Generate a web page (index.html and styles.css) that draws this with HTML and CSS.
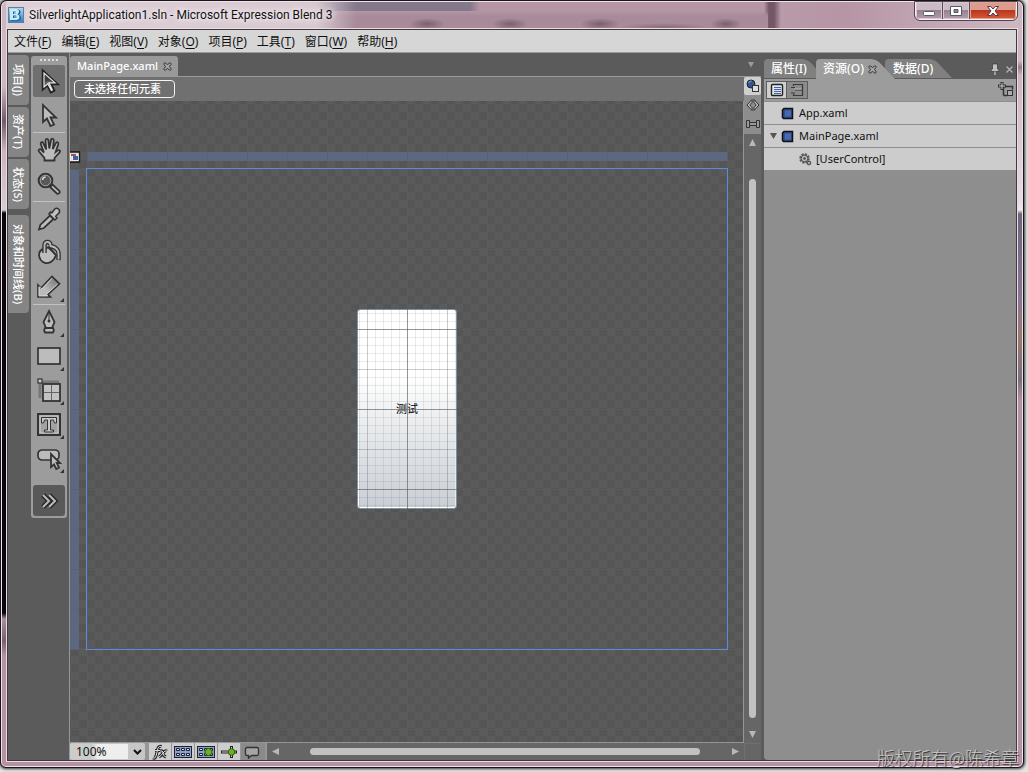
FILE: index.html
```html
<!DOCTYPE html>
<html lang="zh-CN">
<head>
<meta charset="utf-8">
<title>SilverlightApplication1.sln - Microsoft Expression Blend 3</title>
<link rel="stylesheet" href="styles.css">
</head>
<body>
<div class="window">
  <header class="titlebar">
    <svg class="app-icon" width="16" height="16" viewBox="0 0 16 16"><defs><linearGradient id="bl" x2="0" y2="1"><stop stop-color="#a9def5"/><stop offset="1" stop-color="#2c7fc0"/></linearGradient></defs><rect x=".5" y=".5" width="15" height="15" fill="url(#bl)" stroke="#5f7f9c"/><path d="M3 2.500h6.500q3 0 3 2.700q0 1.800-1.700 2.500q2.200.6 2.200 2.900q0 3.100-3.500 3.100H3zM6 5v2h2.500q1 0 1-1t-1-1zM6 9v2.300h2.800q1.200 0 1.200-1.100T8.800 9z" fill="#1f5f96" fill-rule="evenodd"/><path d="M2 2h6q3 0 3 2.700q0 1.800-1.700 2.500q2.200.6 2.200 2.900q0 3-3.500 3H2zM5 4.500V7h2q1 0 1-1.200T7 4.500zM5 8.500V11h2.500q1.200 0 1.200-1.200t-1.200-1.300z" fill="#c9ebf8" fill-rule="evenodd"/></svg>
    <h1 class="title">SilverlightApplication1.sln - Microsoft Expression Blend 3</h1>
    <div class="caption">
      <button class="cap min" aria-label="最小化"><svg width="14" height="12" viewBox="0 0 14 12"><rect x="1.500" y="6.500" width="11" height="4" rx="1" fill="#fff" stroke="#555a68"/></svg></button>
      <button class="cap max" aria-label="最大化"><svg width="14" height="12" viewBox="0 0 14 12"><path d="M1.500 1.500h11v9h-11zM5 4.500v3h4v-3z" fill="#fff" fill-rule="evenodd" stroke="#555a68"/></svg></button>
      <button class="cap close" aria-label="关闭"><svg width="14" height="12" viewBox="0 0 14 12"><path d="M1.500 1.500h3.300L7 4l2.200-2.500h3.300L9 6l3.500 4.500H9.200L7 8l-2.200 2.500H1.500L5 6z" fill="#fff" stroke="#553a42"/></svg></button>
    </div>
  </header>
  <main class="client">
    <nav class="menubar">
      <button>文件(<u>F</u>)</button><button>编辑(<u>E</u>)</button><button>视图(<u>V</u>)</button><button>对象(<u>O</u>)</button><button>项目(<u>P</u>)</button><button>工具(<u>T</u>)</button><button>窗口(<u>W</u>)</button><button>帮助(<u>H</u>)</button>
    </nav>
    <div class="workspace">
      <div class="side-tabs">
        <button>项目(J)</button><button>资产(T)</button><button>状态(S)</button><button class="apart">对象和时间线(B)</button>
      </div>
      <div class="tools">
        <div class="grip"></div>
        <button class="tool on" aria-label="选择"><svg viewBox="0 0 28 28"><path d="M8 4v18l4.500-4 3.500 7 3-1.500-3.300-6.500H22z" fill="#5e5e5e" stroke="#222" stroke-width="2.500"/><path d="M9 6.500V15l4.500-1.500 6 2z" fill="#3c3c3c"/><path d="M9 6v14l3.800-3.300 3.600 6.700 1-.5-3.400-7h6z" fill="none" stroke="#e6e6e6" stroke-width="1.200"/></svg></button>
        <button class="tool" aria-label="直接选择"><svg viewBox="0 0 28 28"><path class="ic" d="M8 4v17l4-3.500 3.500 7.500 3.500-1.500-3.500-7H21z"/></svg></button>
        <button class="tool sep" aria-label="平移"><svg viewBox="0 0 28 28"><path class="ic" d="M9.500 24.500v-2.500L4 15.500q-.9-1.400.2-2.100 1-.6 2.200.5L9 16.500 5.700 8q-.2-1.700 1-2 1.100-.1 1.700 1.300l2.800 6.200L10.500 4.500q.1-1.700 1.300-1.700T13.300 4l1 8.500L16 4q.4-1.500 1.600-1.200T18.800 4.600l-1 8.500 3-6q.8-1.400 1.800-.9t.7 2L20.600 16q3-2.600 4.200-1.500.8 1-.4 2.200L19.500 22v2.500z"/><path d="M11 23v-2l-2-4 3-2.500h6l1.500 3L18 21v2z" fill="#bcbcbc"/></svg></button>
        <button class="tool" aria-label="缩放"><svg viewBox="0 0 28 28"><circle cx="10.500" cy="10.500" r="6.800" fill="#595959" stroke="#333" stroke-width="2"/><circle cx="10.500" cy="10.500" r="5.300" fill="none" stroke="#a9a9a9"/><path d="M7.500 10q.4-3 3-3" fill="none" stroke="#ddd" stroke-width="1.500"/><path class="ic" d="M15 17l2.500-2.500 7 6.500q.8 1-.3 2.200-1.300 1.200-2.300.3z"/></svg></button>
        <button class="tool sep" aria-label="滴管"><svg viewBox="0 0 28 28"><path class="ic" d="M4 24.500l1.300-4.600L15 10.500l3.500 3.500-9.600 9z"/><path d="M14 9l6 6 2-2-1.300-1.700L24 8q1.400-2.400-.5-4-2-1.500-4 .3l-2.600 3.500L15.500 7z" fill="#c0c0c0" stroke="#333" stroke-width="1.500"/></svg></button>
        <button class="tool" aria-label="油漆桶"><svg viewBox="0 0 28 28"><path class="ic" d="M9 10Q4 11 4 16q.5 6 6 8 5 1 9-4l2-3.500-6.500-8.500z"/><path d="M9.500 14V6q.5-3.500 3.500-3 2.500.5 2.300 3.500M15 7q5 .5 7.500 4 1.500 2 1 10" fill="none" stroke="#333" stroke-width="4.500"/><path d="M9.500 14V6q.5-3.500 3.500-3 2.500.5 2.300 3.500M15 7q5 .5 7.500 4 1.500 2 1 9.500" fill="none" stroke="#bbb" stroke-width="1.800"/><path d="M12.500 8l8 7.500" stroke="#333" stroke-width="1.500"/></svg></button>
        <button class="tool more" aria-label="渐变"><svg viewBox="0 0 28 28"><defs><linearGradient id="gr" x1="1" x2="0" y2="1"><stop stop-color="#686868"/><stop offset=".65" stop-color="#bbb"/></linearGradient></defs><path d="M3 24V12l3 3L17 3.500l7.500 7.300L13 21.500l2.500 2.500z" fill="url(#gr)" stroke="#333" stroke-width="1.700"/><path d="M17 5.300L7 15.800l-3-2v9h8.500l-1-1.500L22.500 11" fill="none" stroke="#d4d4d4"/></svg></button>
        <button class="tool more sep" aria-label="钢笔"><svg viewBox="0 0 28 28"><path class="ic" d="M14 3l5.500 11-2.500 6h-6l-2.500-6z"/><path d="M14 4v8" stroke="#333"/><circle cx="14" cy="13" r="1.500" fill="#333"/><path class="ic" d="M10 20h8q1.500 2.500 0 4.500h-8q-1.500-2 0-4.500z"/></svg></button>
        <button class="tool more" aria-label="矩形"><svg viewBox="0 0 28 28"><rect x="3" y="6" width="22" height="16" fill="#bcbcbc" stroke="#333" stroke-width="1.700"/></svg></button>
        <button class="tool more" aria-label="网格"><svg viewBox="0 0 28 28"><path d="M5 22V6h19" fill="none" stroke="#777" stroke-width="3"/><rect x="8" y="8" width="17" height="17" fill="#c2c2c2" stroke="#333" stroke-width="1.800"/><path d="M16.500 9v15M9 16.500h15" stroke="#666"/><rect x="3" y="3" width="4" height="4" fill="#ccc" stroke="#333" stroke-width="1.200"/></svg></button>
        <button class="tool more" aria-label="文本块"><svg viewBox="0 0 28 28"><rect x="3" y="4" width="22" height="21" fill="#999" stroke="#333" stroke-width="2"/><rect x="5" y="6" width="18" height="17" fill="#a2a2a2" stroke="#ccc"/><path d="M6.500 7.500h15v5.500h-2l-1-3h-3v10h3v2h-9v-2h3V10h-3l-1 3h-2z" fill="#c8c8c8" stroke="#333"/></svg></button>
        <button class="tool more" aria-label="按钮控件"><svg viewBox="0 0 28 28"><rect x="3" y="6" width="21" height="10" rx="4" fill="#bcbcbc" stroke="#333" stroke-width="1.700"/><path class="ic" d="M16 10v13l3-2.500 2.300 4.500 2.700-1.300L21.700 19H25z"/></svg></button>
        <button class="expand" aria-label="更多工具"><svg width="28" height="28" viewBox="0 0 28 28"><path d="M8 8l6 6-6 6M14 8l6 6-6 6" fill="none" stroke="#292929" stroke-width="5"/><path d="M8 8l6 6-6 6M14 8l6 6-6 6" fill="none" stroke="#bbb" stroke-width="2"/></svg></button>
      </div>
      <section class="document">
        <div class="doc-tabs">
          <button class="doc-tab">MainPage.xaml <svg class="x" viewBox="0 0 9 9"><path d="M1 1h2l1.500 2L6 1h2v2L6 4.500 8 6v2H6L4.500 6 3 8H1V6l2-1.500L1 3z"/></svg></button>
          <svg class="drop" width="8" height="6" viewBox="0 0 8 6"><path d="M1 0h6L4 5.500z" fill="#9b9b9b"/></svg>
        </div>
        <div class="doc-body">
          <div class="surface">
            <div class="crumbs"><button>未选择任何元素</button></div>
            <div class="canvas">
              <svg class="anchor" width="11" height="12" viewBox="0 0 11 12"><path d="M0 1h9.500v10H0" fill="#eee" stroke="#111" stroke-width="1.300"/><path d="M1 3h5v2H1z" fill="#b54b4b"/><path d="M3 5h5v4H3z" fill="#3e62a5"/></svg>
              <div class="ruler-top"></div>
              <div class="ruler-left"></div>
              <div class="artboard"><div class="sl-button">测试</div></div>
              <div class="gridlines"></div>
              <div class="artboard outline"></div>
            </div>
          </div>
          <div class="right-rail">
            <div class="views">
              <button class="on" aria-label="设计"><svg viewBox="0 0 16 16"><circle cx="6" cy="6" r="4" fill="#2f5592" stroke="#222"/><path d="M3.500 5q.5-2 3-2" fill="none" stroke="#8fb0e0"/><rect x="7.500" y="7.500" width="6" height="6" fill="#ddd" stroke="#333"/></svg></button>
              <button aria-label="XAML"><svg viewBox="0 0 16 16"><path d="M7 2.500L2 8l5 5.500V10.500L4.800 8 7 5.500zM9 2.500L14 8l-5 5.500V10.500L11.200 8 9 5.500z" fill="#bbb" stroke="#333"/></svg></button>
              <button aria-label="拆分"><svg viewBox="0 0 16 16"><path d="M1.500 4.500h3v2h7v-2h3v7h-3v-2h-7v2h-3z" fill="#999" stroke="#333"/><path d="M4.500 5v6M11.500 5v6" stroke="#333"/></svg></button>
            </div>
            <div class="vscroll"><i class="up"></i><b></b><i class="down"></i></div>
          </div>
        </div>
        <div class="statusbar">
          <div class="zoom"><select aria-label="缩放比例"><option>100%</option></select><svg width="15" height="17" viewBox="0 0 15 17"><path d="M4 7l3.500 3.500L11 7" fill="none" stroke="#111" stroke-width="2"/></svg></div>
          <button class="st" aria-label="效果"><svg viewBox="0 0 20 16"><path d="M3 14q2 1 3-2l2-8q1-2.500 3.500-1.500M5 6.500h5M10 7q3-1 3 2t3 4M17 7q-2-1-4 2t-4 4" fill="none" stroke="#222" stroke-width="3"/><path d="M3 14q2 1 3-2l2-8q1-2.500 3.500-1.500M5 6.500h5M10 7q3-1 3 2t3 4M17 7q-2-1-4 2t-4 4" fill="none" stroke="#ddd"/></svg></button>
          <button class="st" aria-label="显示网格"><svg viewBox="0 0 20 16"><rect x="1.500" y="2.500" width="17" height="11" fill="#86a2dc" stroke="#222"/><path d="M3.500 4.500h3v2h-3zM8.500 4.500h3v2h-3zM13.500 4.500h3v2h-3zM3.500 9.500h3v2h-3zM8.500 9.500h3v2h-3zM13.500 9.500h3v2h-3z" fill="#e0e0e0" stroke="#222"/></svg></button>
          <button class="st" aria-label="对齐网格"><svg viewBox="0 0 20 16"><rect x="1.500" y="2.500" width="17" height="11" fill="#86a2dc" stroke="#222"/><path d="M3.500 4.500h3v2h-3zM8.500 4.500h3v2h-3zM13.500 4.500h3v2h-3zM3.500 9.500h3v2h-3zM8.500 9.500h3v2h-3zM13.500 9.500h3v2h-3z" fill="#e0e0e0" stroke="#222"/><circle cx="12.500" cy="8" r="3.500" fill="#68b41e" stroke="#355b12"/></svg></button>
          <button class="st" aria-label="对齐线"><svg viewBox="0 0 20 16"><path d="M2 8h16M12.500 2v12" stroke="#222" stroke-width="3"/><path d="M3 8h14M12.500 3v10" stroke="#ccc"/><circle cx="12.500" cy="8" r="3.300" fill="#68b41e" stroke="#355b12"/></svg></button>
          <button class="st off" aria-label="批注"><svg viewBox="0 0 20 16"><path d="M4 3.500h10q1.500 0 1.500 1.500v5q0 1.500-1.500 1.500H8.500L5.500 14v-2.500H4Q2.500 11.500 2.500 10V5Q2.500 3.500 4 3.500z" fill="#a5a5a5" stroke="#333" stroke-width="1.300"/></svg></button>
          <div class="hscroll"><i class="left"></i><b></b><i class="right"></i></div>
          <div class="corner"></div>
        </div>
      </section>
      <aside class="panel">
        <div class="panel-tabs">
          <button class="t1">属性(I)</button><button class="t2">资源(O) <svg class="x" viewBox="0 0 9 9"><path d="M1 1h2l1.500 2L6 1h2v2L6 4.500 8 6v2H6L4.500 6 3 8H1V6l2-1.500L1 3z"/></svg></button><button class="t3">数据(D)</button>
          <div class="panel-ctl">
            <svg width="10" height="12" viewBox="0 0 10 12"><path d="M2.500 1h5v5l1.500 1v1.500H1V7l1.500-1z" fill="#c2c2c2" stroke="#333" stroke-width=".7"/><path d="M5 8.500V12" stroke="#c2c2c2" stroke-width="1.300"/></svg>
            <svg width="7" height="7" viewBox="0 0 7 7"><path d="M.5.500l6 6M6.500.500l-6 6" stroke="#b4b4b4" stroke-width="1.200"/></svg>
          </div>
        </div>
        <div class="panel-bar">
          <div class="toggle"><button class="on" aria-label="列表"><svg viewBox="0 0 16 14"><rect x="2.500" y="1.500" width="11" height="11" rx="1" fill="#e6e6e6" stroke="#222" stroke-width="1.400"/><path d="M5 4.500h7M5 6.500h7M5 8.500h7M5 10.500h7" stroke="#3d64b5"/></svg></button><button aria-label="树"><svg viewBox="0 0 16 14"><path d="M4.500 3V1.500h9v11h-9V11M6 7h7M2 4.500h4M2 10h4" fill="none" stroke="#3a3a3a" stroke-width="1.200"/><path d="M5.500 6h7" stroke="#bbb"/></svg></button></div>
          <button class="add" aria-label="添加资源字典"><svg width="16" height="16" viewBox="0 0 16 16"><path d="M5.500 13.500v-9h9v3M5.500 13.500h4" fill="none" stroke="#333" stroke-width="1.500"/><path d="M4 0v8M0 4h8" stroke="#333" stroke-width="3"/><path d="M4 1v6M1 4h6" stroke="#ccc"/><rect x="9.500" y="8.500" width="5" height="5" fill="#aaa" stroke="#333"/></svg></button>
        </div>
        <ul class="tree">
          <li><span class="tw"></span><svg class="file" viewBox="0 0 13 13"><path d="M1.500 3l1.500-1.500h8.500v10h-9l-1-1z" fill="#324f8f" stroke="#111" stroke-width="1.500"/><path d="M4 3.500h6v6H4z" fill="#4669b0"/></svg>App.xaml</li>
          <li><span class="tw"><svg width="7" height="6" viewBox="0 0 7 6"><path d="M0 0h7L3.500 6z" fill="#555"/></svg></span><svg class="file" viewBox="0 0 13 13"><path d="M1.500 3l1.500-1.500h8.500v10h-9l-1-1z" fill="#324f8f" stroke="#111" stroke-width="1.500"/><path d="M4 3.500h6v6H4z" fill="#4669b0"/></svg>MainPage.xaml</li>
          <li class="child"><span class="tw"></span><svg class="file" viewBox="0 0 13 13"><circle cx="5.500" cy="5.500" r="4" fill="#aaa" stroke="#555" stroke-width="2.500" stroke-dasharray="2 1.100"/><circle cx="5.500" cy="5.500" r="3.300" fill="#bbb" stroke="#555"/><circle cx="5.500" cy="5.500" r="1.200" fill="#444"/><circle cx="10" cy="10" r="1.700" fill="#bbb" stroke="#555" stroke-width="1.300"/></svg>[UserControl]</li>
        </ul>
      </aside>
    </div>
  </main>
  <div class="watermark">版权所有@陈希章</div>
</div>
</body>
</html>
```
FILE: styles.css
```css
* { box-sizing: border-box; }
body {
  margin: 0;
  height: 100vh;
  padding: 0 4px 4px 0;
  background: #e4e4e4;
  font: 12px/16px "Noto Sans", "Noto Sans CJK SC", sans-serif;
  color: #111;
  overflow: hidden;
}
button {
  margin: 0; padding: 0; border: 0;
  background: none; color: inherit; font: inherit;
}
svg { display: block; flex: none; }

.window {
  position: relative;
  height: 100%;
  display: flex;
  flex-direction: column;
  padding: 1px 5px 5px;
  border: 1px solid #1a1418;
  border-radius: 7px 7px 6px 6px;
  box-shadow: inset 0 0 0 1px #efe3ea, 0 0 3px 1px #333;
  background:
    linear-gradient(#c9b4c0 0, #cdb8c2 60px, #8d7d86 66px, #cbb4be 74px, #e5dbe2 200px, #f0e6ee 209px, #6b687c 213px, #8a7696 300px, #9a7b6d 335px, #77727f 380px, #b492a4 400px, #b492a4 100%) right / 8px 100% no-repeat,
    linear-gradient(#cdb8c2 0, #cdb8c2 85px, #6f5b6b 120px, #cbb4be 150px, #d5ccd2 209px, #08060d 212px, #08060d 612px, #a6909c 618px, #76606e 640px, #b492a4 655px) left / 8px 100% no-repeat,
    #b492a4;
}
.titlebar {
  height: 26px;
  flex: none;
  display: flex;
  align-items: flex-start;
  padding: 0 0 0 2px;
  background:
    radial-gradient(18px 6px at 421px 22px, rgba(90,65,82,.6) 0, transparent 100%),
    radial-gradient(18px 6px at 504px 22px, rgba(90,65,82,.6) 0, transparent 100%),
    radial-gradient(20px 6px at 594px 22px, rgba(90,65,82,.6) 0, transparent 100%),
    radial-gradient(44px 4px at 658px 25px, rgba(90,65,82,.4) 0, transparent 100%),
    radial-gradient(16px 6px at 720px 22px, rgba(90,65,82,.6) 0, transparent 100%),
    linear-gradient(90deg, #ddd0d6 0, #d8c9d1 310px, transparent 350px),
    linear-gradient(90deg, #84788c 464px, transparent 474px) left top / 474px 9px no-repeat,
    linear-gradient(transparent 9px, #a88b9a 14px) left / 762px 100% no-repeat,
    linear-gradient(90deg, #b695a5 758px, #735767 763px, #735767 768px, #b89aa9 775px, #b695a5 840px, #cdb8c2);
}
.app-icon { margin-top: 5px; }
.title {
  margin: 5px 0 0 5px;
  font: 400 12px/16px Roboto, sans-serif;
  white-space: nowrap;
  text-shadow: 0 0 5px #fff, 0 0 8px #fff;
}
.caption {
  display: flex;
  margin-left: auto;
  margin-right: 1px;
  border: 1px solid #fbeff5;
  border-top: 0;
  border-radius: 0 0 5px 5px;
  outline: 1px solid #514650;
  overflow: hidden;
}
.cap {
  width: 27px; height: 17px;
  display: grid; place-items: center;
  border-right: 1px solid #594b56;
  box-shadow: inset 0 0 0 1px #d9c7d2;
  background: linear-gradient(#cbbbc6 0 45%, #98818f 50%, #b29fac);
}
.cap.close { width: 46px; border: 0; box-shadow: inset 0 0 0 1px #e0a595; background: linear-gradient(#dc9b8d 0 45%, #b93620 50%, #d85b35); }

.client {
  flex: 1;
  min-height: 0;
  display: flex;
  flex-direction: column;
  border: 1px solid #43373e;
  outline: 1px solid #ebdce4;
  margin: 1px;
  background: #5b5b5b;
}
.menubar {
  height: 23px;
  flex: none;
  display: flex;
  align-items: center;
  gap: 10px;
  padding: 2px 6px 0;
  background: #d6d6d6;
  border-bottom: 1px solid #999;
}
.menubar u { text-underline-offset: 2px; }
.workspace { flex: 1; min-height: 0; display: flex; }

.side-tabs { width: 21px; flex: none; padding-top: 2px; display: flex; flex-direction: column; gap: 2px; }
.side-tabs button {
  writing-mode: vertical-rl;
  text-orientation: sideways;
  width: 21px;
  height: 50px;
  padding-right: 2px;
  font-size: 11px;
  font-weight: 500;
  text-align: center;
  color: #fff;
  background: #858585;
  border-radius: 0 4px 4px 0;
}
.side-tabs .apart { margin-top: 4px; height: 98px; }

.tools {
  width: 36px;
  flex: none;
  align-self: flex-start;
  margin: 3px 2px 0;
  padding: 0 2px 2px;
  background: #9c9c9c;
  border-radius: 3px;
}
.grip { height: 8px; display: grid; place-items: center; }
.grip::before { content: ""; width: 19px; height: 2px; background: repeating-linear-gradient(90deg, #ddd 0 2px, transparent 2px 4px); }
.tool { position: relative; display: grid; place-items: center; width: 32px; height: 34px; border-radius: 3px; }
.tool svg { width: 28px; height: 28px; }
.tool .ic { fill: #bcbcbc; stroke: #333; stroke-width: 1.800px; }
.tool.on { background: #6f6f6f; background-clip: content-box; padding: 1px 0; }
.tool.sep { border-top: 1px solid #c2c2c2; height: 35px; border-radius: 0; }
.tool.more::after { content: ""; position: absolute; right: 1px; bottom: 2px; border: 2px solid; border-color: transparent #333 #333 transparent; }
.expand { display: grid; place-items: center; margin-top: 10px; width: 32px; height: 31px; background: #595959; border-radius: 3px; }

.document { flex: 1; min-width: 0; display: flex; flex-direction: column; border-left: 1px solid #969696; }
.doc-tabs { height: 24px; flex: none; display: flex; align-items: flex-end; padding-right: 6px; border-bottom: 1px solid #999; }
.doc-tab { display: flex; align-items: center; gap: 5px; height: 20px; padding: 0 6px 0 7px; font-size: 11px; font-weight: 500; color: #fff; background: #999; border-radius: 3px 3px 0 0; }
.x { width: 9px; height: 9px; fill: #a5a5a5; stroke: #444; stroke-width: 1px; }
.drop { margin: 0 0 8px auto; }
.doc-body { flex: 1; min-height: 0; display: flex; }
.surface { flex: 1; min-width: 0; display: flex; flex-direction: column; }
.crumbs { height: 24px; flex: none; padding: 3px 4px; background: #707070; }
.crumbs button { display: block; height: 18px; padding: 0 12px 0 9px; color: #fff; border: 1px solid #f4f4f4; border-radius: 4px; font-size: 11px; font-weight: 500; line-height: 16px; min-width: 101px; text-align: left; }
.canvas {
  flex: 1;
  position: relative;
  overflow: hidden;
  border: 1px solid #969696;
  border-width: 0 1px 1px 0;
  background: conic-gradient(#5b5b5b 25%, #555555 0 50%, #5b5b5b 0 75%, #555555 0) 1px 3px / 16px 16px;
}
.gridlines {
  position: absolute; inset: 0;
  background:
    linear-gradient(90deg, rgba(95,95,95,.5) 1px, transparent 1px) 17px 0 / 80px 80px,
    linear-gradient(rgba(95,95,95,.5) 1px, transparent 1px) 0 68px / 80px 80px,
    linear-gradient(90deg, rgba(90,90,90,.22) 1px, transparent 1px) 17px 0 / 40px 40px,
    linear-gradient(rgba(90,90,90,.22) 1px, transparent 1px) 0 68px / 40px 40px,
    linear-gradient(90deg, rgba(88,88,88,.12) 1px, transparent 1px) 1px 0 / 8px 8px,
    linear-gradient(rgba(88,88,88,.12) 1px, transparent 1px) 0 4px / 8px 8px;
}
.anchor { position: absolute; left: 0; top: 50px; }
.ruler-top { position: absolute; left: 17px; top: 51px; width: 641px; height: 9px; background: #5c6881; }
.ruler-left { position: absolute; left: 0; top: 68px; width: 9px; height: 481px; background: #5c6881; }
.artboard { position: absolute; left: 16px; top: 67px; width: 642px; height: 482px; display: grid; place-items: center; }
.outline { border: 1px solid #5b8be0; }
.sl-button {
  width: 100px; height: 200px;
  display: grid; place-items: center;
  font-size: 11px; color: #000;
  border: 1px solid #7d94a5;
  border-radius: 3px;
  box-shadow: inset 0 0 0 1px #fff;
  background: linear-gradient(#fff 35%, #f0f2f3 50%, #c9ced5);
}

.right-rail { width: 17px; flex: none; display: flex; flex-direction: column; background: #666; }
.views { background: #8d8d8d; height: 57px; }
.views button { display: grid; place-items: center; width: 17px; height: 19px; }
.views .on { background: #cfcfcf; border-radius: 2px; height: 18px; }
.views svg { width: 16px; height: 16px; }
.vscroll { flex: 1; display: flex; flex-direction: column; align-items: center; padding: 5px 0; }
.vscroll b { flex: 1; width: 7px; margin: 33px 0 13px; border-radius: 4px; background: #c1c1c1; }
.vscroll i, .hscroll i { width: 7px; height: 7px; background: #b8b8b8; }
.up { clip-path: polygon(50% 0, 100% 100%, 0 100%); }
.down { clip-path: polygon(0 0, 100% 0, 50% 100%); }
.left { clip-path: polygon(0 50%, 100% 0, 100% 100%); }
.right { clip-path: polygon(0 0, 100% 50%, 0 100%); }

.statusbar { height: 17px; flex: none; display: flex; background: #969696; }
.zoom { position: relative; width: 75px; margin-right: 4px; flex: none; background: #c6c6c6; border-radius: 2px; }
.zoom select {
  appearance: none; display: block;
  width: 75px; height: 17px; padding: 0 6px; margin: 0;
  border: 0; font: inherit; line-height: 17px; color: #111;
  background: linear-gradient(90deg, #ccc 22px, #eee 28px) left / 58px 15px no-repeat transparent;
}
.zoom svg { position: absolute; right: 0; top: 0; pointer-events: none; }
.st { display: grid; place-items: center; width: 22px; margin-right: 1px; background: #cdcdcd; flex: none; }
.st svg { width: 20px; height: 16px; }
.st.off { background: #8a8a8a; width: 24px; margin-right: 2px; }
.hscroll { flex: 1; display: flex; align-items: center; padding: 0 5px 0 5px; background: #666; }
.hscroll b { flex: 1; height: 7px; margin: 0 32px 0 31px; border-radius: 4px; background: #c1c1c1; }
.corner { width: 17px; border-left: 1px solid #707070; border-top: 1px solid #707070; background: #666; }

.panel { width: 252px; flex: none; margin-left: 3px; display: flex; flex-direction: column; background: #8e8e8e; border-bottom-left-radius: 4px; }
.panel-tabs { height: 26px; flex: none; display: flex; align-items: flex-end; background: #5b5b5b; color: #fff; font-size: 11px; font-weight: 500; }
.panel-tabs > button { height: 20px; position: relative; text-align: left; padding-left: 7px; background: #808080; white-space: nowrap; font-size: 12px; }
.panel-tabs .t1 { width: 64px; margin-right: -12px; clip-path: path("M0 19V4Q0 0 4 0H36Q43 0 47 4L60 19Z"); }
.panel-tabs .t2 { width: 79px; z-index: 1; margin-right: -10px; display: flex; align-items: center; gap: 4px; background: #9c9c9c; clip-path: path("M0 20V4Q0 0 4 0H54Q60 0 64 4L79 20Z"); }
.panel-tabs .t3 { width: 68px; padding-left: 8px; clip-path: path("M0 19V4Q0 0 4 0H43Q49 0 53 4L67 19Z"); }
.panel-ctl { display: flex; align-items: center; gap: 6px; margin: 0 3px 4px auto; }
.panel-bar { height: 22px; flex: none; display: flex; align-items: center; justify-content: space-between; padding: 0 2px; background: #9c9c9c; }
.toggle { display: flex; border: 1px solid #5d5d5d; }
.toggle button { display: grid; place-items: center; width: 20px; height: 16px; background: #8b8b8b; }
.toggle .on { background: #cfcfcf; border-right: 1px solid #5d5d5d; }
.toggle svg { width: 16px; height: 14px; }
.tree { list-style: none; margin: 0; padding: 0; font-size: 11px; }
.tree li { height: 23px; display: flex; align-items: center; background: #cccccc; border-top: 1px solid #8e8e8e; }
.tw { width: 17px; padding-left: 6px; flex: none; }
.file { width: 13px; height: 13px; margin-right: 5px; }
.child { padding-left: 18px; }
.child .file { margin-right: 4px; }

.watermark {
  position: absolute;
  right: 4px; bottom: 0;
  font: 300 18px/20px "Noto Sans CJK SC", sans-serif;
  color: #c9c9c9;
  text-shadow: 1px 1px 1px #222;
  white-space: nowrap;
}
```
